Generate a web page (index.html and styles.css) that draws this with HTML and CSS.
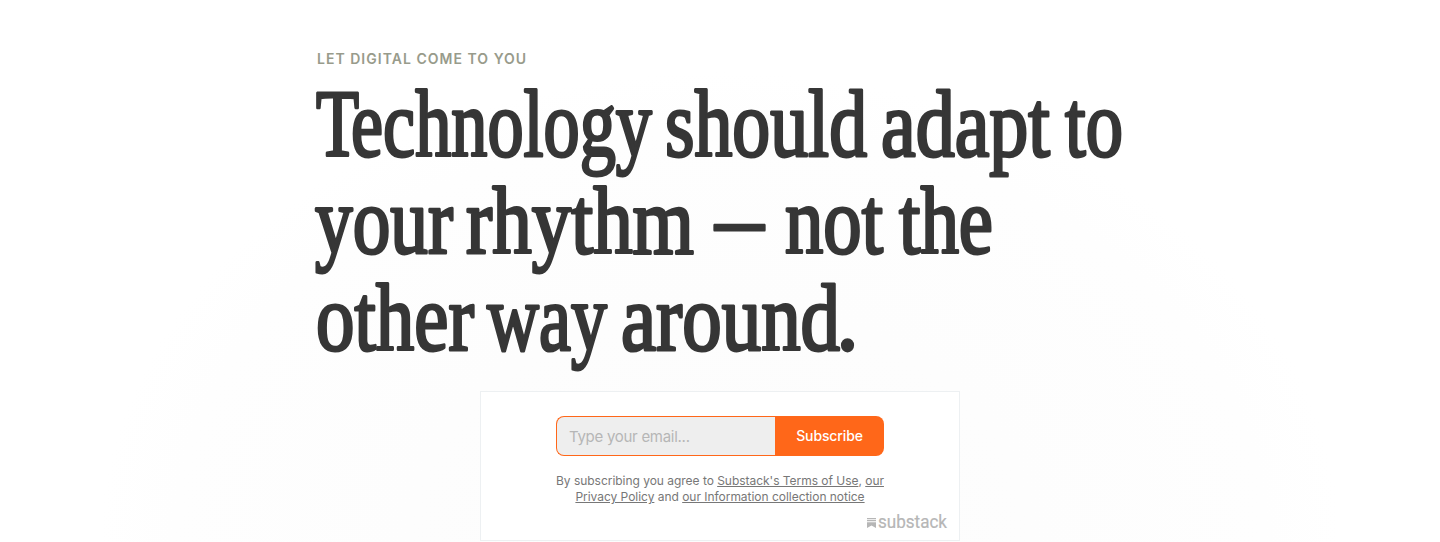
FILE: index.html
```html
<!DOCTYPE html>
<html lang="en">
<head>
<meta charset="utf-8">
<title>Let digital come to you</title>
<link rel="stylesheet" href="styles.css">
</head>
<body>
<main class="hero">
  <header class="intro">
    <p class="eyebrow">LET DIGITAL COME TO YOU</p>
    <h1 class="headline">
      <svg class="headline-art" width="820" height="300" viewBox="0 0 820 300">
        <text x="0" y="74.5" textLength="43" lengthAdjust="spacingAndGlyphs">T</text>
        <text x="35" y="74.5" textLength="301" lengthAdjust="spacingAndGlyphs">echnology</text>
        <text x="349" y="74.5" textLength="202" lengthAdjust="spacingAndGlyphs">should</text>
        <text x="565" y="74.5" textLength="169" lengthAdjust="spacingAndGlyphs">adapt</text>
        <text x="749" y="74.5" textLength="58" lengthAdjust="spacingAndGlyphs">to</text>
        <text x="-1" y="171.5" textLength="138" lengthAdjust="spacingAndGlyphs">your</text>
        <text x="150" y="171.5" textLength="228" lengthAdjust="spacingAndGlyphs">rhythm</text>
        <text x="398.500" y="168.5" textLength="50" lengthAdjust="spacingAndGlyphs">—</text>
        <text x="469" y="171.5" textLength="98" lengthAdjust="spacingAndGlyphs">not</text>
        <text x="583" y="171.5" textLength="94" lengthAdjust="spacingAndGlyphs">the</text>
        <text x="0" y="268.5" textLength="158" lengthAdjust="spacingAndGlyphs">other</text>
        <text x="171" y="268.5" textLength="120" lengthAdjust="spacingAndGlyphs">way</text>
        <text x="305" y="268.5" textLength="219" lengthAdjust="spacingAndGlyphs">around</text>
        <text x="520.500" y="268.5" textLength="22" lengthAdjust="spacingAndGlyphs">.</text>
      </svg>
    </h1>
  </header>
  <section class="card">
    <form class="signup">
      <input class="email" type="email" placeholder="Type your email..." aria-label="Email">
      <button class="subscribe" type="button">Subscribe</button>
    </form>
    <p class="terms"><span class="line">By subscribing you agree to <a>Substack's Terms of Use</a>, <a>our</a></span><span class="line"><a>Privacy Policy</a> and <a>our Information collection notice</a></span></p>
    <div class="brand">
      <svg class="mark" width="9" height="10" viewBox="0 0 9 10"><path d="M0 0h9v1.2H0zM0 2.1h9v1.2H0zM0 4.2h9V10L4.5 7.5 0 10z"/></svg>
      <svg class="wordmark" width="70" height="20" viewBox="0 0 70 20"><text x="0" y="16.5" textLength="69" lengthAdjust="spacingAndGlyphs">substack</text></svg>
    </div>
  </section>
</main>
</body>
</html>
```
FILE: styles.css
```css
* { box-sizing: border-box; }
body { margin: 0; background: #fff; font-family: Inter, "Liberation Sans", sans-serif; overflow: hidden; }
.hero {
  height: 542px;
  padding-top: 50px;
  display: flex;
  flex-direction: column;
  align-items: center;
  background: radial-gradient(ellipse 620px 470px at 720px 542px, #fcfcfc 0%, #fdfdfd 50%, #fefefe 88%, #fff 100%);
}
.intro { width: 808px; height: 341px; }
.eyebrow { margin: 0; height: 31px; padding-left: 1px; font-size: 14px; line-height: 18px; font-weight: 600; letter-spacing: 1.02px; color: #989b8b; white-space: nowrap; }
.headline { margin: 0; height: 300px; }
.headline-art { display: block; overflow: visible; }
.headline-art text { font: 400 94.5px "Liberation Serif", serif; fill: #363636; stroke: #363636; stroke-width: 3px; stroke-linejoin: round; }
.card { width: 480px; height: 150px; padding-top: 24px; border: 1px solid #edf0f2; background: #fff; display: flex; flex-direction: column; align-items: center; }
.signup { margin: 0; width: 328px; height: 40px; display: flex; flex: none; }
.email { width: 219px; min-width: 0; padding: 1px 12px 0; border: 1px solid #ff6719; border-right: 0; border-radius: 8px 0 0 8px; background: #eee; font: 400 15px Inter, sans-serif; letter-spacing: -0.28px; outline: 0; }
.email::placeholder { color: #b6b6b6; opacity: 1; }
.subscribe { width: 109px; padding: 0 0 1px; border: 0; border-radius: 0 8px 8px 0; background: #ff6719; color: #fff; font: 500 14px Inter, sans-serif; letter-spacing: -0.12px; }
.terms { margin: 17px 0 0; font-size: 12px; line-height: 16px; letter-spacing: -0.03px; color: #777; text-align: center; white-space: nowrap; }
.line { display: block; }
.terms a { text-decoration: underline; }
.brand { align-self: flex-end; display: flex; align-items: center; gap: 2px; height: 20px; margin: 6px 11px 0 0; }
.mark { fill: #b6b6b6; margin-top: 3px; }
.wordmark { overflow: visible; }
.wordmark text { font: 400 18px Roboto, sans-serif; fill: #b6b6b6; stroke: #b6b6b6; stroke-width: 0.2px; }
```
